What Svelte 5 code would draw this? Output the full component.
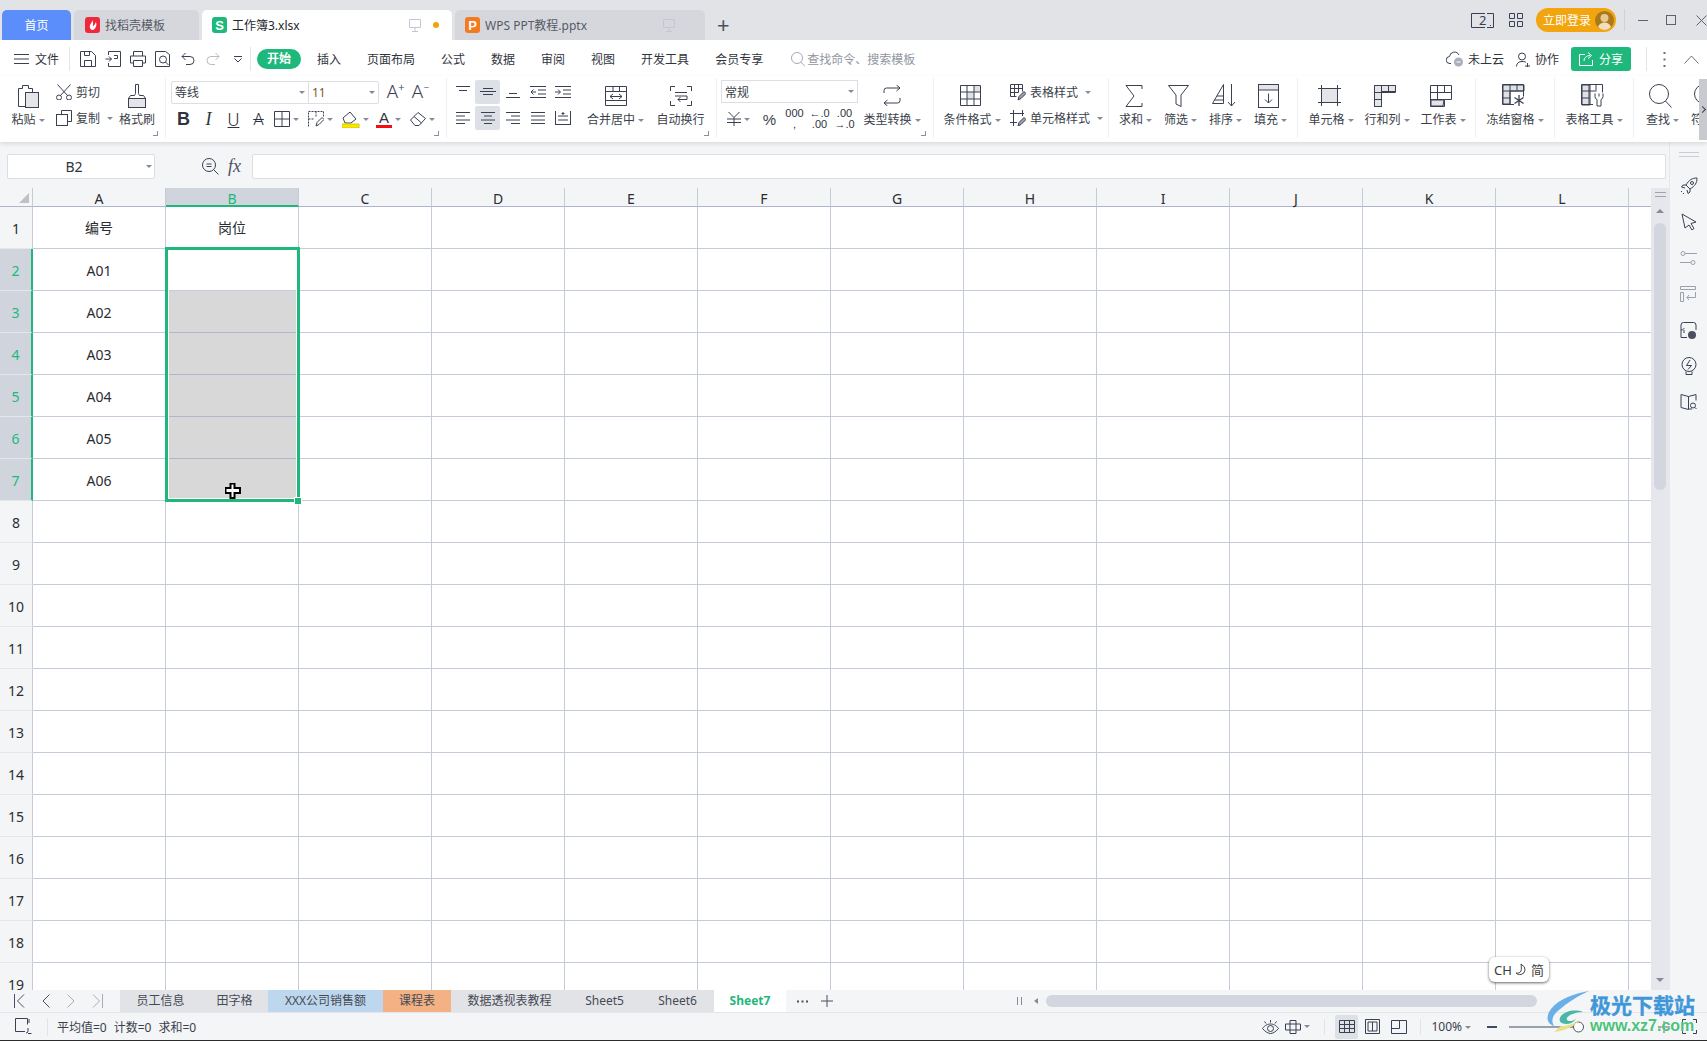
<script>
  const icons = {
    menu: [15, 12, '<path d="M0 1.5h15M0 6h15M0 10.5h15"/>'],
    save: [16, 16, '<path d="M.5.5h11l4 4v11H.5zM4.5 15.5v-6h7v6M4.5.5v4h5v-4"/>'],
    tpl: [16, 16, '<path d="M3.5 4V.5h12v15H3.5V12M.5 8h6M4 5.5L6.5 8 4 10.5"/><path d="M9 4.5h3.5v3H9"/>'],
    print: [16, 16, '<path d="M3.5 5V.5h9V5M3.5 12H.5V5h15v7h-3M3.5 9.5h9v6h-9z"/>'],
    preview: [15, 16, '<path d="M.5 15.5V.5h10l4 3v12z"/><circle cx="8" cy="8.5" r="3.5"/><path d="M10.5 11l3 3"/>'],
    undo: [14, 14, '<path d="M4.5 1L1 4.5 4.5 8M1 4.5h8a4 4 0 0 1 0 8H5"/>'],
    redo: [14, 14, '<path stroke="#b9bcc4" d="M9.5 1L13 4.5 9.5 8M13 4.5H5a4 4 0 0 0 0 8h4"/>'],
    drop: [8, 7, '<path d="M0 .5h8M.5 2.5L4 6l3.5-3.5"/>'],
    search: [14, 15, '<g stroke="#a3a9b6"><circle cx="6" cy="6" r="5.5"/><path d="M10 10l4 4.5"/></g>'],
    cloud: [18, 16, '<path d="M5 12.5H4a3.5 3.5 0 0 1-.5-7A5 5 0 0 1 13 4"/><circle cx="12.5" cy="11" r="4.5" fill="#a9afbd" stroke="none"/><path d="M10.5 11h4" stroke="#fff"/>'],
    person: [15, 15, '<circle cx="6" cy="4.5" r="3.5"/><path d="M.5 14.5c0-3.5 2.5-5 5.5-5s3.5.5 4 1M9 14h5M11.5 11v5"/>'],
    share: [14, 14, '<path stroke="#fff" d="M6 2.5H.5v11h13V8M5 9c0-3 2.5-5.5 6-5.5M9 .5l3.5 3L9 6.5"/>'],
    dots: [3, 15, '<path stroke="#6b7080" stroke-width="2" stroke-dasharray="2 4.5" d="M1.5 0v15"/>'],
    up: [15, 9, '<path stroke="#6b7080" d="M.5 8.5L7.5 1l7 7.5"/>'],
    paste: [22, 24, '<path d="M8 22.5H1.5v-18h4v-3h6v3h4v4"/><rect x="8.5" y="8.5" width="13" height="15" fill="#e3e5e9"/>'],
    cut: [16, 16, '<path d="M1.5.5l10 11M14.5.5l-10 11"/><circle cx="3" cy="13.5" r="2.5"/><circle cx="13" cy="13.5" r="2.5"/>'],
    copy: [16, 16, '<path d="M5.5 4.5v-4h10v11h-4"/><rect x=".5" y="4.5" width="11" height="11"/>'],
    brush: [18, 24, '<rect x=".5" y="14.5" width="17" height="9" fill="#e3e5e9"/><path d="M.5 14.5l2-3h4l1-2V.5h3v9l1 2h4l2 3"/>'],
    atop: [14, 14, '<path d="M0 1.5h14M3 5.5h8"/>'],
    amid: [16, 14, '<path d="M0 6.5h16M3 3.5h10M3 9.5h10"/>'],
    abot: [14, 14, '<path d="M3 8.5h8M0 12.5h14"/>'],
    indl: [16, 14, '<path d="M0 1.5h16M8 5h8M8 9h8M0 12.5h16M6 7H1M3.5 4.5L1 7l2.5 2.5"/>'],
    indr: [16, 14, '<path d="M0 1.5h16M8 5h8M8 9h8M0 12.5h16M0 7h5M3 4.5L5.5 7 3 9.5"/>'],
    al: [14, 14, '<path d="M0 1.5h14M0 5h9M0 9h14M0 12.5h9"/>'],
    ac: [14, 14, '<path d="M0 1.5h14M3 5h8M0 9h14M3 12.5h8"/>'],
    ar: [14, 14, '<path d="M0 1.5h14M5 5h9M0 9h14M5 12.5h9"/>'],
    aj: [14, 14, '<path d="M0 1.5h14M0 5h14M0 9h14M0 12.5h14"/>'],
    ad: [16, 14, '<path d="M.5 0v14M15.5 0v14M0 13.5h16M3 5h10M3 9h10M8 1v3M6.5 2.5h3"/>'],
    border: [16, 16, '<path d="M.5.5h15v15H.5zM8 .5v15M.5 8h15"/>'],
    cellb: [16, 16, '<path stroke-dasharray="2 1" d="M.5 15.5V.5h15v6M8 .5v6M.5 8h6"/><path d="M8 15l1-3.5 5-5 2 2-5 5z"/>'],
    fill: [18, 17, '<path d="M1 7l7-6 6 7-5 4H3z"/><path d="M0 13h17v4H0z" fill="#f7e800" stroke="#d9c900"/>'],
    erase: [16, 16, '<path d="M.5 9L8 1.5l7.5 6L9 14.5H5z"/><path d="M4 5.5l7.5 6.5"/>'],
    merge: [22, 20, '<path d="M.5.5h21v19H.5zM.5 5.5h21M8 .5v5M14.5.5v5M.5 14.5h21M5 10.5h12M8 8l-3 2.5L8 13M14 8l3 2.5-3 2.5"/>'],
    wrap: [22, 20, '<path d="M5 .5H.5V5M17 .5h4.5V5M5 19.5H.5V15M17 19.5h4.5V15M5 6.5h12M5 10h12v3.5H8M10.5 11L8 13.5l2.5 2.5"/>'],
    yen: [14, 14, '<path d="M1.5 0L7 5.5 12.5 0M0 7h14M0 10.5h14M7 5.5V14"/>'],
    conv: [18, 21, '<path d="M1 8V5.5A2.5 2.5 0 0 1 3.5 3H17M13.5 0L17 3l-3.5 3M17 13v2.5a2.5 2.5 0 0 1-2.5 2.5H1M4.5 15L1 18l3.5 3"/>'],
    cond: [21, 21, '<path d="M7 7h7v7H7zM14 .5h6.5V7H14z" fill="#dfe1e5" stroke="none"/><path d="M.5.5h20v20H.5zM.5 7h20M.5 14h20M7 .5v20M14 .5v20"/>'],
    tstyle: [16, 17, '<path d="M.5.5h12v7M.5.5v12h6M.5 4.5h12M.5 8.5h8M4.5.5v12M8.5.5v8"/><path d="M8 16l1-3.5 5-5 2 2-5 5z" fill="#9aa0ad"/>'],
    cstyle: [16, 16, '<path d="M3.5 0v16M0 3.5h14M12.5 0v6M0 12.5h7"/><path d="M8 16l1-3.5 5-5 2 2-5 5z" fill="#9aa0ad"/>'],
    sum: [18, 22, '<path d="M17 4V.5H1L9 11 1 21.5h16V18"/>'],
    filter: [21, 22, '<path d="M.5.5h20L13 10v11.5L8 19v-9z"/>'],
    sort: [24, 23, '<path d="M.5 19.5L11.5.5v19zM5 12h6.5M2.5 16h9M19.5 0v22M16 18l3.5 4 3.5-4"/>'],
    fillc: [21, 24, '<rect x=".5" y=".5" width="20" height="23"/><rect x=".5" y=".5" width="20" height="5.5" fill="#e3e5e9"/><path d="M10.5 9.5V19M7 15.5l3.5 3.5 3.5-3.5"/>'],
    cellt: [23, 21, '<rect x="3.5" y="3.5" width="16" height="14" fill="#e3e5e9"/><path d="M0 3.5h23M0 17.5h23M3.5 0v21M19.5 0v21"/>'],
    rowc: [22, 22, '<path d="M0 0h22v6.5H7.5V22H0z" fill="#e3e5e9"/><path d="M.5.5h21v7h-14v14h-7zM.5 7.5h7M7.5.5v7M14.5.5v7M.5 14.5h7"/>'],
    sheet: [22, 22, '<path d="M.5.5h21v14h-7v7H.5zM.5 7.5h21M.5 14.5h14M7.5.5v14M14.5.5v7"/><path d="M1 15h13l-1 6H1z" fill="#e3e5e9"/>'],
    freeze: [23, 23, '<path d="M1 1h21v6H8v13H1z" fill="#dfe1e5"/><path d="M12 20.5H.5V.5h21v12M.5 7h21M.5 14h8M8 .5v20M15 .5v6"/><path d="M17 11v11M12.5 13.5l9 6M21.5 13.5l-9 6" stroke-width="1.3"/>'],
    ttool: [23, 23, '<path d="M1 1h8v20H1z" fill="#dfe1e5"/><path d="M12 20.5H.5V.5h21v8M.5 7h15M.5 14h8M8 .5v20M15 .5v6"/><path d="M14 9.5v3a3 3 0 0 0 2 3V22h4v-6.5a3 3 0 0 0 2-3v-3M18 9.5v3"/>'],
    find: [23, 24, '<circle cx="10" cy="10" r="9.5"/><path d="M16.5 17l6 6.5"/>'],
    zoomf: [17, 17, '<circle cx="7" cy="7" r="6.5"/><path d="M12 12l4.5 4.5M4.5 6h5M4.5 8.5h5"/>'],
    first: [11, 14, '<path stroke="#4b5162" d="M.5 0v14M10 .5L3.5 7l6.5 6.5"/>'],
    prev: [8, 14, '<path stroke="#4b5162" d="M7.5.5L1 7l6.5 6.5"/>'],
    next: [8, 14, '<path stroke="#a7abb6" d="M.5.5L7 7 .5 13.5"/>'],
    last: [11, 14, '<path stroke="#a7abb6" d="M10.5 0v14M1 .5L7.5 7 1 13.5"/>'],
    plus: [12, 12, '<path stroke="#4b5162" d="M6 0v12M0 6h12"/>'],
    ell: [11, 3, '<path stroke="#4b5162" stroke-width="2" stroke-dasharray="2 2.5" d="M0 1.5h11"/>'],
    stat: [17, 17, '<path d="M10 13.5H.5V.5h12v6M14 1v4"/><path d="M11 15a2 2 0 0 0 2-2v-3M13 15.5h3.5"/>'],
    eye: [17, 14, '<path d="M.5 8.5C3 5 6 4 8.5 4s5.5 1 8 4.5c-2.5 3-5.5 5-8 5s-5.5-2-8-5z"/><circle cx="8.5" cy="8.5" r="3"/><path d="M8.5 0v2.5M2.5 1.5l1.5 2M14.5 1.5l-1.5 2"/>'],
    mid: [16, 14, '<path d="M5 .5h6v13H5zM.5 4h15v6H.5z"/>'],
    vnorm: [16, 13, '<path d="M.5.5h15v12H.5zM.5 4.5h15M.5 8.5h15M5.5.5v12M10.5.5v12"/>'],
    vpage: [15, 15, '<path d="M.5.5h14v14H.5zM3 3h9v9H3zM7.5 3v9"/>'],
    vbrk: [16, 14, '<path d="M.5.5h15v13H.5zM.5 8.5h8V.5"/>'],
    full: [15, 15, '<path d="M4 .5H.5V4M11 .5h3.5V4M4 14.5H.5V11M11 14.5h3.5V11"/>'],
    twin: [23, 15, '<path d="M14 .5H.5v14H14M16 .5h6.5v14H16M19 12.5h1"/>'],
    apps: [14, 14, '<path d="M.5.5h5v5h-5zM8.5.5h5v5h-5zM.5 8.5h5v5h-5zM8.5 8.5h5v5h-5z"/>'],
    tmon: [12, 13, '<path stroke="#c3c7d0" d="M.5.5h11v8H.5zM6 8.5v4M3 12.5h6"/>'],
    rocket: [18, 18, '<path d="M17 1c-5 0-8 2-11 7l4 4c5-3 7-6 7-11zM6 8H3l-1.5 2L5 11M10 12v3l-2 1.5L7 13M2 14l-1 1M4 16l-1 1"/><circle cx="12" cy="6" r="1.5"/>'],
    cursor: [16, 18, '<path d="M1 1l14 8-5 1.5 3 5-2 1.5-3-5L4 15z"/>'],
    sliders: [17, 14, '<g stroke="#9aa0ad"><circle cx="3" cy="2.5" r="2"/><path d="M5 2.5h12M0 11.5h11"/><circle cx="13" cy="11.5" r="2"/></g>'],
    trans: [17, 16, '<g stroke="#9aa0ad"><path d="M.5.5h15v3H.5zM.5 6.5h3v9h-3z"/><path d="M15.5 6v5.5H7M9 9l-2 2.5L9 14"/></g>'],
    tplant: [17, 17, '<path d="M7 15.5H1V3A2.5 2.5 0 0 1 3.5.5h10A2.5 2.5 0 0 1 16 3v5M1 8c2 0 3-1 3-2M4 11V8"/><circle cx="12" cy="13" r="4" fill="#4a5060" stroke="none"/>'],
    bulb: [16, 18, '<circle cx="8" cy="7.5" r="7"/><path d="M5 14.5v3h6v-3M9 3L5.5 8.5h5L7 12.5"/>'],
    book: [17, 16, '<path d="M8.5 2.5L1 .5v13l7.5 2zM8.5 2.5L16 .5v6M9 15h3"/><circle cx="13" cy="11.5" r="2.5"/><path d="M15 13.5l1.5 1.5"/>']
  };

  const cols = ['A', 'B', 'C', 'D', 'E', 'F', 'G', 'H', 'I', 'J', 'K', 'L', ''];
  const rows = Array.from({ length: 19 }, (_, i) => i + 1);
  const colA = { 1: '编号', 2: 'A01', 3: 'A02', 4: 'A03', 5: 'A04', 6: 'A05', 7: 'A06' };
  const isSel = (r) => r >= 2 && r <= 7;

  const sideIcons = ['rocket', 'cursor', 'sliders', 'trans', 'tplant', 'bulb', 'book'];

  const sheets = [
    { name: '员工信息', c: 'w81' },
    { name: '田字格', c: 'w67' },
    { name: 'XXX公司销售额', c: 'w115 blue' },
    { name: '课程表', c: 'w68 orange' },
    { name: '数据透视表教程', c: 'w117' },
    { name: 'Sheet5', c: 'w73' },
    { name: 'Sheet6', c: 'w73' },
    { name: 'Sheet7', c: 'w72 active' }
  ];
</script>

{#snippet ic(name)}
  <svg class="ic" width={icons[name][0]} height={icons[name][1]} viewBox="0 0 {icons[name][0]} {icons[name][1]}">{@html icons[name][2]}</svg>
{/snippet}

{#snippet big(icon, label, w, caret = true)}
  <div class="big {w}">
    <div class="big-ic">{@render ic(icon)}</div>
    <div class="lbl">{label}{#if caret}<i class="caret"></i>{/if}</div>
  </div>
{/snippet}

<div class="app">
  <header class="titlebar">
    <div class="tab home">首页</div>
    <div class="tab t2">
      <span class="logo red"><svg width="12" height="12" viewBox="0 0 12 12"><path d="M6 1C5 4 2 5 3 9c.5 2 3 2.5 4 1.5C9 9 10 6 9 3 8 5 7 6.5 6 7.5z" fill="#fff" /></svg></span>
      <span>找稻壳模板</span>
    </div>
    <div class="tab t3">
      <span class="logo green">S</span>
      <span class="t3-name">工作簿3.xlsx</span>
      {@render ic('tmon')}
      <i class="dot"></i>
    </div>
    <div class="tab t4">
      <span class="logo orange-l">P</span>
      <span class="t4-name">WPS PPT教程.pptx</span>
      {@render ic('tmon')}
    </div>
    <div class="newtab">+</div>
    <div class="title-right">
      <span class="twin">{@render ic('twin')}<b>2</b></span>
      {@render ic('apps')}
      <div class="login">
        <span>立即登录</span>
        <svg width="19" height="19" viewBox="0 0 19 19"><circle cx="9.5" cy="9.5" r="9.5" fill="#a97a1c" /><circle cx="9.5" cy="7" r="4" fill="#e9c98f" /><path d="M3 16c1-3 3.5-4.5 6.5-4.5S15 13 16 16c-2 2-4 3-6.5 3S5 18 3 16z" fill="#f3dfba" /></svg>
      </div>
      <i class="tsep"></i>
      <i class="win-min"></i>
      <i class="win-max"></i>
      <svg class="ic" width="11" height="11" viewBox="0 0 11 11"><path d="M.5.5l10 10M10.5.5l-10 10" stroke="#5c6272" /></svg>
    </div>
  </header>

  <nav class="menubar">
    {@render ic('menu')}
    <span class="file">文件</span>
    <i class="msep first-sep"></i>
    <div class="qa">{@render ic('save')}</div>
    <div class="qa">{@render ic('tpl')}</div>
    <div class="qa">{@render ic('print')}</div>
    <div class="qa">{@render ic('preview')}</div>
    <div class="qa">{@render ic('undo')}</div>
    <div class="qa">{@render ic('redo')}</div>
    <div class="qa">{@render ic('drop')}</div>
    <i class="msep"></i>
    <span class="pill">开始</span>
    {#each ['插入', '页面布局', '公式', '数据', '审阅', '视图', '开发工具', '会员专享'] as m}
      <span class="mtab">{m}</span>
    {/each}
    <span class="find">{@render ic('search')}<span>查找命令、搜索模板</span></span>
    <div class="menu-right">
      <span class="mr">{@render ic('cloud')}<span>未上云</span></span>
      <span class="mr">{@render ic('person')}<span>协作</span></span>
      <span class="sharebtn">{@render ic('share')}<span>分享</span></span>
      <i class="msep rs"></i>
      {@render ic('dots')}
      {@render ic('up')}
    </div>
  </nav>

  <section class="ribbon">
    <div class="group g1">
      {@render big('paste', '粘贴', 'w56')}
      <div class="smalls w60">
        <div class="sm">{@render ic('cut')}<span>剪切</span></div>
        <div class="sm">{@render ic('copy')}<span>复制</span><i class="caret"></i></div>
      </div>
      {@render big('brush', '格式刷', 'w42', false)}
      <i class="corner"></i>
    </div>

    <div class="group g2">
      <div class="fontcol">
        <div class="fontrow">
          <div class="fbox name"><span>等线</span><i class="caret"></i></div>
          <div class="fbox size"><span>11</span><i class="caret"></i></div>
          <span class="grow">A<sup>+</sup></span>
          <span class="grow">A<sup>−</sup></span>
        </div>
        <div class="fmtrow">
          <span class="fc fb">B</span>
          <span class="fc fi">I</span>
          <span class="fc fu">U</span>
          <span class="fc fs">A</span>
          <span class="fd">{@render ic('border')}<i class="caret"></i></span>
          <span class="fd">{@render ic('cellb')}<i class="caret"></i></span>
          <span class="fd">{@render ic('fill')}<i class="caret"></i></span>
          <span class="fd"><span class="fcolor">A</span><i class="caret"></i></span>
          <span class="fd">{@render ic('erase')}<i class="caret"></i></span>
        </div>
      </div>
      <i class="corner"></i>
    </div>

    <div class="group g3">
      <div class="aligns">
        <span class="ac">{@render ic('atop')}</span>
        <span class="ac on">{@render ic('amid')}</span>
        <span class="ac">{@render ic('abot')}</span>
        <span class="ac">{@render ic('indl')}</span>
        <span class="ac">{@render ic('indr')}</span>
        <span class="ac">{@render ic('al')}</span>
        <span class="ac on">{@render ic('ac')}</span>
        <span class="ac">{@render ic('ar')}</span>
        <span class="ac">{@render ic('aj')}</span>
        <span class="ac">{@render ic('ad')}</span>
      </div>
      {@render big('merge', '合并居中', 'w65')}
      {@render big('wrap', '自动换行', 'w65', false)}
      <i class="corner"></i>
    </div>

    <div class="group g4">
      <div class="numcol">
        <div class="fbox numfmt"><span>常规</span><i class="caret"></i></div>
        <div class="numrow">
          <span class="nd w36">{@render ic('yen')}<i class="caret"></i></span>
          <span class="nd w25 pct">%</span>
          <span class="nd w25 n3">000<br />,</span>
          <span class="nd w25 n3">←.0<br />.00</span>
          <span class="nd w25 n3">.00<br />→.0</span>
        </div>
      </div>
      {@render big('conv', '类型转换', 'w60')}
      <i class="corner"></i>
    </div>

    <div class="group g5">
      {@render big('cond', '条件格式', 'w56')}
      <div class="smalls st">
        <div class="sm">{@render ic('tstyle')}<span>表格样式</span><i class="caret"></i></div>
        <div class="sm">{@render ic('cstyle')}<span>单元格样式</span><i class="caret"></i></div>
      </div>
    </div>

    <div class="group g6">
      {@render big('sum', '求和', 'w45')}
      {@render big('filter', '筛选', 'w45')}
      {@render big('sort', '排序', 'w45')}
      {@render big('fillc', '填充', 'w45')}
    </div>

    <div class="group g7">
      {@render big('cellt', '单元格', 'w56')}
      {@render big('rowc', '行和列', 'w56')}
      {@render big('sheet', '工作表', 'w56')}
    </div>

    <div class="group g8">{@render big('freeze', '冻结窗格', 'w78')}</div>
    <div class="group g8">{@render big('ttool', '表格工具', 'w78')}</div>

    <div class="group g9">
      {@render big('find', '查找', 'w45')}
      {@render big('find', '符号', 'w45')}
    </div>
    <div class="rib-next"><i></i></div>
  </section>

  <div class="body">
    <main class="main">
      <div class="formula">
        <div class="namebox"><span>B2</span><i class="caret"></i></div>
        <span class="fz">{@render ic('zoomf')}</span>
        <span class="fx">fx</span>
        <div class="finput"></div>
      </div>

      <div class="sheet">
        <div class="grid">
          <div class="colhead">
            <div class="corner-cell"><i></i></div>
            {#each cols as c, i}
              <div class="ch" class:sel={i === 1}>{c}</div>
            {/each}
          </div>
          <div class="rows">
            {#each rows as r}
              <div class="row">
                <div class="rh" class:sel={isSel(r)}>{r}</div>
                <div class="cell">{colA[r] ?? ''}</div>
                <div class="cell" class:grey={r >= 3 && r <= 7}>{r === 1 ? '岗位' : ''}</div>
                {#each cols.slice(2) as _}
                  <div class="cell"></div>
                {/each}
              </div>
            {/each}
            <div class="selection">
              <i class="handle"></i>
              <svg class="cursor" width="16" height="16" viewBox="0 0 16 16"><path d="M5.5.5h4V5H15v5H9.5v5h-4v-5H.5V5h5z" fill="#fff" stroke="#000" stroke-width="2" /></svg>
            </div>
          </div>
        </div>
        <div class="vscroll">
          <i class="grip"></i>
          <i class="tri-up"></i>
          <div class="vthumb"></div>
          <i class="tri-down"></i>
        </div>
      </div>
    </main>

    <aside class="side">
      <i class="sgrip"></i>
      {#each sideIcons as s}
        <div class="side-ic">{@render ic(s)}</div>
      {/each}
    </aside>
  </div>

  <div class="tabstrip">
    <div class="navs">
      {@render ic('first')}
      {@render ic('prev')}
      {@render ic('next')}
      {@render ic('last')}
    </div>
    {#each sheets as s}
      <div class="stab {s.c}">{s.name}</div>
    {/each}
    <div class="more">{@render ic('ell')}{@render ic('plus')}</div>
    <i class="split"></i>
    <i class="tri-left"></i>
    <div class="hscroll"><div class="hthumb"></div></div>
  </div>

  <footer class="status">
    {@render ic('stat')}
    <i class="msep ss"></i>
    <span>平均值=0</span>
    <span>计数=0</span>
    <span>求和=0</span>
    <div class="st-right">
      {@render ic('eye')}
      <span class="mid">{@render ic('mid')}<i class="caret"></i></span>
      <i class="msep"></i>
      <span class="view on">{@render ic('vnorm')}</span>
      <span class="view">{@render ic('vpage')}</span>
      <span class="view brk">{@render ic('vbrk')}</span>
      <i class="msep"></i>
      <span class="pct100">100%<i class="caret"></i></span>
      <i class="zminus"></i>
      <svg class="slider" width="76" height="12" viewBox="0 0 76 12"><path d="M0 6h64" stroke="#3f4a63" stroke-width="1" /><circle cx="69.5" cy="6" r="5" fill="#fff" stroke="#4b5162" /></svg>
      <span class="zplus">{@render ic('plus')}</span>
      {@render ic('full')}
    </div>
  </footer>

  <div class="ime">CH <svg width="13" height="13" viewBox="0 0 13 13"><path d="M6 1l1 1a5 5 0 0 1-1 9.5c-2 .5-4-.5-5-1.5 2 .5 4 0 5-2 .5-1.5.5-4 0-7z" fill="none" stroke="#444" /></svg> 简</div>

  <div class="watermark">
    <svg width="44" height="42" viewBox="0 0 44 42">
      <path d="M43 0C30 2 12 8 5 18c-5 7-5 14 3 17-3-5-2-11 5-16C21 12 32 5 43 0z" fill="#5aa9e6" opacity=".9" />
      <path d="M37 21c-8-3-18-1-22 4-3 4-1 8 5 8 4 0 8-2 10-5-3 2-7 3-9 1-2-3 6-8 16-8z" fill="#49b7a8" />
      <path d="M8 41c10-1 20-5 26-12-6 4-13 6-19 6z" fill="#e5e28a" />
    </svg>
    <div class="wm-text">
      <b>极光下载站</b>
      <span>www.xz7.com</span>
    </div>
  </div>
</div>

<style>
  :global(body) {
    margin: 0;
    background: #fff;
  }

  .app {
    position: relative;
    width: 1707px;
    height: 1041px;
    display: flex;
    flex-direction: column;
    overflow: hidden;
    font-family: "Noto Sans", "Noto Sans CJK SC", sans-serif;
    font-size: 12px;
    color: #3a3f4b;
    background: #fff;
  }

  .ic {
    flex: none;
    fill: none;
    stroke: #3a4052;
    stroke-width: 1;
    display: block;
  }

  .caret {
    display: inline-block;
    flex: none;
    width: 0;
    height: 0;
    border-left: 3px solid transparent;
    border-right: 3px solid transparent;
    border-top: 3px solid #868b98;
    margin-left: 3px;
    vertical-align: middle;
  }

  /* title bar */
  .titlebar {
    height: 40px;
    flex: none;
    display: flex;
    align-items: flex-end;
    padding-left: 2px;
    gap: 3px;
    background: #e2e3e7;
    box-sizing: border-box;
  }

  .tab {
    height: 30px;
    display: flex;
    align-items: center;
    box-sizing: border-box;
    border-radius: 5px 5px 0 0;
    background: #d6d7dc;
    color: #555a66;
  }

  .home {
    width: 69px;
    justify-content: center;
    background: #5b8dfb;
    color: #fff;
  }

  .t2 {
    width: 125px;
    padding-left: 11px;
    gap: 5px;
  }

  .t3 {
    width: 250px;
    padding-left: 10px;
    background: #fff;
    color: #23262d;
  }

  .t3-name {
    margin-left: 5px;
    width: 177px;
  }

  .dot {
    width: 6px;
    height: 6px;
    border-radius: 50%;
    background: #f0a30a;
    margin-left: 12px;
  }

  .t4 {
    width: 250px;
    padding-left: 10px;
  }

  .t4-name {
    margin-left: 5px;
    width: 178px;
  }

  .logo {
    width: 15px;
    height: 16px;
    border-radius: 3px;
    display: flex;
    align-items: center;
    justify-content: center;
    color: #fff;
    font-weight: 700;
    font-size: 13px;
    font-family: "Liberation Sans", sans-serif;
  }

  .red {
    background: #f0283c;
  }

  .green {
    background: #1fb87c;
  }

  .orange-l {
    background: #f47a1f;
  }

  .newtab {
    align-self: center;
    margin: 8px 0 0 9px;
    font-size: 22px;
    line-height: 20px;
    color: #4b5162;
  }

  .title-right {
    margin-left: auto;
    align-self: stretch;
    display: flex;
    align-items: center;
  }

  .twin {
    position: relative;
    margin-right: 15px;
  }

  .twin b {
    position: absolute;
    left: 8px;
    top: -2px;
    font-weight: 400;
    font-size: 13px;
    color: #3a4052;
  }

  .login {
    margin-left: 13px;
    width: 80px;
    height: 24px;
    box-sizing: border-box;
    border-radius: 12px;
    background: #f3a50f;
    color: #fff;
    display: flex;
    align-items: center;
    justify-content: space-between;
    padding: 0 2px 0 7px;
  }

  .tsep {
    width: 1px;
    height: 22px;
    background: #cfd1d7;
    margin: 0 13px 0 8px;
  }

  .win-min {
    width: 10px;
    height: 1px;
    background: #5c6272;
    margin-right: 18px;
  }

  .win-max {
    width: 8px;
    height: 8px;
    border: 1px solid #5c6272;
    margin-right: 20px;
  }

  /* menu */
  .menubar {
    height: 36px;
    flex: none;
    display: flex;
    align-items: center;
    padding: 2px 0 0 14px;
    background: #fff;
    box-sizing: border-box;
    color: #30343d;
  }

  .file {
    margin: 0 10px 0 6px;
  }

  .msep {
    width: 1px;
    height: 24px;
    background: #e3e4e8;
    flex: none;
  }

  .first-sep {
    margin-right: 5px;
  }

  .qa {
    width: 25px;
    display: flex;
    justify-content: center;
  }

  .pill {
    margin: 0 3px 0 6px;
    width: 44px;
    height: 20px;
    border-radius: 10px;
    background: #1fb87c;
    color: #fff;
    font-weight: 700;
    text-align: center;
    line-height: 20px;
  }

  .mtab {
    padding: 0 13px;
  }

  .find {
    margin-left: 15px;
    display: flex;
    align-items: center;
    gap: 2px;
    color: #9095a2;
  }

  .menu-right {
    margin-left: auto;
    display: flex;
    align-items: center;
    padding-right: 8px;
  }

  .mr {
    display: flex;
    align-items: center;
    gap: 4px;
    margin-right: 12px;
  }

  .sharebtn {
    width: 60px;
    height: 24px;
    margin-right: 15px;
    border-radius: 3px;
    background: #1fb87c;
    color: #fff;
    display: flex;
    align-items: center;
    justify-content: center;
    gap: 6px;
  }

  .rs {
    margin-right: 16px;
  }

  .menu-right .ic:last-child {
    margin-left: 18px;
  }

  /* ribbon */
  .ribbon {
    position: relative;
    z-index: 2;
    height: 66px;
    flex: none;
    display: flex;
    background: #fff;
    box-shadow: 0 2px 4px rgba(30, 35, 50, 0.12);
    overflow: hidden;
  }

  .group {
    position: relative;
    flex: none;
    box-sizing: border-box;
    height: 60px;
    margin-top: 2px;
    display: flex;
    border-right: 1px solid #eef0f2;
  }

  .g1 { width: 166px; }
  .g2 { width: 281px; padding-left: 5px; }
  .g3 { width: 270px; padding-left: 3px; }
  .g4 { width: 217px; padding-left: 4px; }
  .g5 { width: 175px; padding-left: 10px; }
  .g6 { width: 189px; padding-left: 4px; }
  .g7 { width: 178px; padding-left: 5px; }
  .g8 { width: 79px; }
  .g9 { width: 75px; padding-left: 6px; border-right: none; }

  .w25 { width: 25px; }
  .w36 { width: 36px; }
  .w42 { width: 42px; }
  .w45 { width: 45px; }
  .w56 { width: 56px; }
  .w60 { width: 60px; }
  .w65 { width: 65px; }
  .w78 { width: 78px; }

  .big {
    flex: none;
    display: flex;
    flex-direction: column;
    align-items: center;
  }

  .big-ic {
    height: 33px;
    display: flex;
    align-items: center;
    padding-top: 2px;
    box-sizing: border-box;
  }

  .g5 .big-ic,
  .g6 .big-ic,
  .g7 .big-ic,
  .g8 .big-ic,
  .g9 .big-ic {
    padding-right: 4px;
  }

  .lbl {
    height: 16px;
    line-height: 16px;
    margin-top: 1px;
    white-space: nowrap;
    color: #3a3f4b;
  }

  .smalls {
    flex: none;
    padding-top: 1px;
  }

  .st {
    margin-left: 10px;
  }

  .sm {
    height: 26px;
    display: flex;
    align-items: center;
    gap: 4px;
    white-space: nowrap;
  }

  .corner {
    position: absolute;
    right: 7px;
    bottom: 2px;
    width: 4px;
    height: 4px;
    border-right: 1px solid #8b909c;
    border-bottom: 1px solid #8b909c;
  }

  .fontcol {
    width: 272px;
  }

  .fontrow {
    height: 26px;
    display: flex;
    align-items: center;
    padding-top: 2px;
    box-sizing: border-box;
  }

  .fbox {
    height: 23px;
    box-sizing: border-box;
    border: 1px solid #dcdee3;
    display: flex;
    align-items: center;
    justify-content: space-between;
    padding: 0 3px;
    background: #fff;
  }

  .name {
    width: 138px;
    border-radius: 2px 0 0 2px;
  }

  .size {
    width: 71px;
    margin-left: -1px;
    border-radius: 0 2px 2px 0;
    color: #7a5a2a;
  }

  .grow {
    width: 25px;
    font-size: 19px;
    font-weight: 300;
    line-height: 20px;
    text-align: center;
    color: #3a4052;
    font-family: Roboto, "Liberation Sans", sans-serif;
  }

  .grow:nth-child(3) {
    margin-left: 4px;
  }

  .grow sup {
    font-size: 11px;
    line-height: 0;
  }

  .fmtrow {
    height: 26px;
    display: flex;
    align-items: center;
    margin-top: 2px;
  }

  .fc {
    width: 25px;
    text-align: center;
    font-family: "Liberation Sans", sans-serif;
    font-size: 18px;
    color: #2e3440;
  }

  .fb { font-weight: 700; }
  .fi { font-family: "Liberation Serif", serif; font-style: italic; }
  .fu { text-decoration: underline; font-family: Roboto, sans-serif; font-weight: 300; }
  .fs { text-decoration: line-through; font-size: 17px; font-family: Roboto, sans-serif; font-weight: 300; }

  .fd {
    width: 34px;
    display: flex;
    align-items: center;
    padding-left: 3px;
    box-sizing: border-box;
  }

  .fcolor {
    width: 16px;
    text-align: center;
    font-family: "Liberation Sans", sans-serif;
    font-size: 15px;
    line-height: 15px;
    color: #2e3440;
    border-bottom: 3px solid #f01010;
  }

  .aligns {
    width: 125px;
    padding: 2px 8px 0 0;
    display: grid;
    grid-template-columns: repeat(5, 25px);
    grid-auto-rows: 26px;
    box-sizing: content-box;
  }

  .ac {
    display: flex;
    align-items: center;
    justify-content: center;
    height: 24px;
    border-radius: 2px;
  }

  .ac.on,
  .view.on {
    background: #dde1e6;
  }

  .numcol {
    width: 141px;
  }

  .numfmt {
    width: 137px;
    margin-top: 2px;
  }

  .numrow {
    display: flex;
    align-items: center;
    height: 26px;
    margin-top: 3px;
  }

  .nd {
    display: flex;
    align-items: center;
    justify-content: center;
    text-align: center;
    flex: none;
  }

  .w36.nd {
    width: 36px;
    justify-content: flex-start;
    padding-left: 6px;
    box-sizing: border-box;
  }

  .pct {
    font-size: 15px;
    font-family: "Liberation Sans", sans-serif;
  }

  .n3 {
    font-size: 11px;
    line-height: 11px;
    font-family: "Liberation Sans", sans-serif;
    color: #2e3440;
  }

  .rib-next {
    position: absolute;
    right: 0;
    top: 3px;
    width: 8px;
    height: 61px;
    background: #c9cad0;
    display: flex;
    align-items: center;
    justify-content: center;
  }

  .rib-next i {
    width: 4px;
    height: 4px;
    margin-left: -2px;
    border-top: 1px solid #3a4052;
    border-right: 1px solid #3a4052;
    transform: rotate(45deg);
  }

  /* body */
  .body {
    flex: 1;
    min-height: 0;
    display: flex;
    background: #f4f5f7;
  }

  .main {
    width: 1669px;
    flex: none;
    display: flex;
    flex-direction: column;
    min-height: 0;
  }

  .formula {
    height: 46px;
    flex: none;
    display: flex;
    align-items: center;
    padding: 3px 3px 0 7px;
    box-sizing: border-box;
  }

  .namebox {
    position: relative;
    width: 148px;
    height: 25px;
    box-sizing: border-box;
    border: 1px solid #dcdee3;
    border-radius: 2px;
    background: #fff;
    padding-right: 14px;
    text-align: center;
    line-height: 23px;
    font-size: 14px;
    color: #2e3440;
  }

  .namebox .caret {
    position: absolute;
    right: 2px;
    top: 10px;
  }

  .fz {
    margin-left: 47px;
  }

  .fx {
    width: 24px;
    margin-left: 9px;
    font-family: "Liberation Serif", serif;
    font-style: italic;
    font-size: 18px;
    color: #4b5162;
  }

  .finput {
    flex: 1;
    height: 25px;
    box-sizing: border-box;
    border: 1px solid #dcdee3;
    border-radius: 2px;
    background: #fff;
  }

  .sheet {
    flex: 1;
    min-height: 0;
    display: flex;
  }

  .grid {
    width: 1651px;
    flex: none;
    display: flex;
    flex-direction: column;
    overflow: hidden;
    background: #fff;
    font-size: 14px;
    color: #2a2d33;
  }

  .colhead {
    display: flex;
    height: 19px;
    flex: none;
    background: #f4f5f7;
  }

  .corner-cell {
    width: 33px;
    box-sizing: border-box;
    flex: none;
    border-right: 1px solid #c6cbda;
    border-bottom: 1px solid #aeb5ca;
    position: relative;
  }

  .corner-cell i {
    position: absolute;
    right: 3px;
    bottom: 3px;
    width: 0;
    height: 0;
    border-left: 10px solid transparent;
    border-bottom: 10px solid #bfc1c6;
  }

  .ch {
    width: 133px;
    flex: none;
    box-sizing: border-box;
    border-right: 1px solid #c6cbda;
    border-bottom: 1px solid #aeb5ca;
    text-align: center;
    line-height: 22px;
  }

  .ch.sel {
    background: #d0d4dc;
    border-bottom: 2px solid #1fb87c;
    color: #1fb87c;
  }

  .rows {
    position: relative;
    flex: 1;
    min-height: 0;
    overflow: hidden;
  }

  .row {
    display: flex;
    height: 42px;
  }

  .rh {
    width: 33px;
    flex: none;
    box-sizing: border-box;
    background: #f4f5f7;
    border-right: 1px solid #c6cbda;
    border-bottom: 1px solid #e4e6ec;
    text-align: center;
    line-height: 44px;
  }

  .rh.sel {
    background: #d0d4dc;
    color: #1fb87c;
    border-right: 2px solid #1fb87c;
  }

  .cell {
    width: 133px;
    flex: none;
    box-sizing: border-box;
    border-right: 1px solid #c6cbda;
    border-bottom: 1px solid #c6cbda;
    text-align: center;
    line-height: 43px;
  }

  .row:first-child .cell {
    line-height: 41px;
  }

  .cell.grey {
    background: #d8d8d8;
    border-bottom-color: #b2b6c6;
  }

  .selection {
    position: absolute;
    left: 165px;
    top: 40px;
    width: 135px;
    height: 255px;
    box-sizing: border-box;
    border: 3px solid #1fb87c;
    box-shadow: inset 0 0 0 1px #fff;
  }

  .handle {
    position: absolute;
    right: -4px;
    bottom: -5px;
    width: 6px;
    height: 6px;
    background: #1fb87c;
    outline: 1px solid #fff;
  }

  .cursor {
    position: absolute;
    left: 57px;
    bottom: 0;
  }

  .vscroll {
    width: 18px;
    flex: none;
    position: relative;
    background: #e6e7ec;
    display: flex;
    flex-direction: column;
    align-items: center;
  }

  .grip {
    width: 11px;
    height: 3px;
    margin-top: 4px;
    border-top: 1px solid #9ea3b0;
    border-bottom: 1px solid #9ea3b0;
  }

  .tri-up {
    margin-top: 12px;
    border-left: 4px solid transparent;
    border-right: 4px solid transparent;
    border-bottom: 4px solid #868b98;
  }

  .vthumb {
    width: 12px;
    height: 267px;
    margin-top: 10px;
    border-radius: 6px;
    background: #d3d6de;
  }

  .tri-down {
    margin-top: auto;
    margin-bottom: 8px;
    border-left: 4px solid transparent;
    border-right: 4px solid transparent;
    border-top: 4px solid #868b98;
  }

  .side {
    flex: 1;
    display: flex;
    flex-direction: column;
    align-items: center;
    padding-top: 10px;
    border-left: 1px solid #e6e7ec;
  }

  .sgrip {
    width: 20px;
    height: 3px;
    margin-bottom: 11px;
    border-top: 1px solid #c9ccd4;
    border-bottom: 1px solid #c9ccd4;
  }

  .side-ic {
    height: 36px;
    display: flex;
    align-items: center;
  }

  /* sheet tabs */
  .tabstrip {
    height: 22px;
    flex: none;
    display: flex;
    align-items: stretch;
    background: #f4f5f7;
  }

  .navs {
    width: 120px;
    flex: none;
    display: flex;
    align-items: center;
    padding-left: 14px;
    gap: 17px;
    box-sizing: border-box;
  }

  .stab {
    flex: none;
    background: #e2e3e7;
    text-align: center;
    line-height: 22px;
    color: #454a55;
  }

  .w81 { width: 81px; }
  .w67 { width: 67px; }
  .w115 { width: 115px; }
  .w68 { width: 68px; }
  .w117 { width: 117px; }
  .w73 { width: 73px; }
  .w72 { width: 72px; }

  .blue { background: #bdd7ee; }
  .orange { background: #f4b183; }

  .active {
    background: #fff;
    color: #1fb87c;
    font-weight: 700;
  }

  .more {
    display: flex;
    align-items: center;
    padding-left: 11px;
    gap: 13px;
  }

  .split {
    margin-left: 184px;
    align-self: center;
    width: 3px;
    height: 8px;
    border-left: 1px solid #868b98;
    border-right: 1px solid #868b98;
  }

  .tri-left {
    align-self: center;
    margin-left: 12px;
    border-top: 3px solid transparent;
    border-bottom: 3px solid transparent;
    border-right: 4px solid #868b98;
  }

  .hscroll {
    margin-left: 8px;
    flex: 1;
    padding: 5px 0;
    box-sizing: border-box;
  }

  .hthumb {
    width: 491px;
    height: 12px;
    border-radius: 6px;
    background: #d3d6de;
  }

  /* status bar */
  .status {
    height: 29px;
    flex: none;
    box-sizing: border-box;
    display: flex;
    align-items: center;
    padding-left: 15px;
    background: #f4f5f7;
    border-top: 1px solid #e4e5ea;
    border-bottom: 1px solid #2c2c2c;
  }

  .status > span {
    margin-right: 7px;
  }

  .ss {
    height: 18px;
    margin: 0 9px 0 15px;
  }

  .st-right {
    margin-left: auto;
    display: flex;
    align-items: center;
    padding-right: 10px;
  }

  .st-right .msep {
    height: 16px;
  }

  .mid {
    display: flex;
    align-items: center;
    margin: 0 14px 0 6px;
  }

  .view {
    width: 23px;
    height: 24px;
    margin-right: 3px;
    border-radius: 2px;
    display: flex;
    align-items: center;
    justify-content: center;
  }

  .view.on {
    margin-left: 10px;
  }

  .view.brk {
    margin-right: 10px;
  }

  .pct100 {
    margin: 0 16px 0 10px;
    color: #3a3f4b;
  }

  .zminus {
    width: 10px;
    height: 2px;
    background: #3f4a63;
    margin-right: 12px;
  }

  .zplus {
    margin: 0 12px 0 73px;
  }

  /* floating */
  .ime {
    position: absolute;
    left: 1489px;
    top: 957px;
    width: 60px;
    height: 25px;
    box-sizing: border-box;
    display: flex;
    align-items: center;
    justify-content: center;
    gap: 3px;
    background: #fff;
    border-radius: 6px;
    box-shadow: 0 1px 3px rgba(0, 0, 0, 0.6);
    font-size: 13px;
    color: #3c3c3c;
  }

  .watermark {
    position: absolute;
    left: 1546px;
    top: 991px;
    display: flex;
  }

  .wm-text {
    display: flex;
    flex-direction: column;
    margin-top: 1px;
  }

  .wm-text b {
    font-family: "Noto Sans CJK SC", sans-serif;
    font-size: 21px;
    line-height: 24px;
    color: #3f97d8;
    -webkit-text-stroke: 0.4px #3f97d8;
    text-shadow: 0 0 2px #fff;
    white-space: nowrap;
  }

  .wm-text span {
    font-family: "Liberation Sans", sans-serif;
    font-weight: 700;
    font-size: 16px;
    line-height: 20px;
    color: #4cc27a;
    text-shadow: 0 0 2px #fff;
  }
</style>
